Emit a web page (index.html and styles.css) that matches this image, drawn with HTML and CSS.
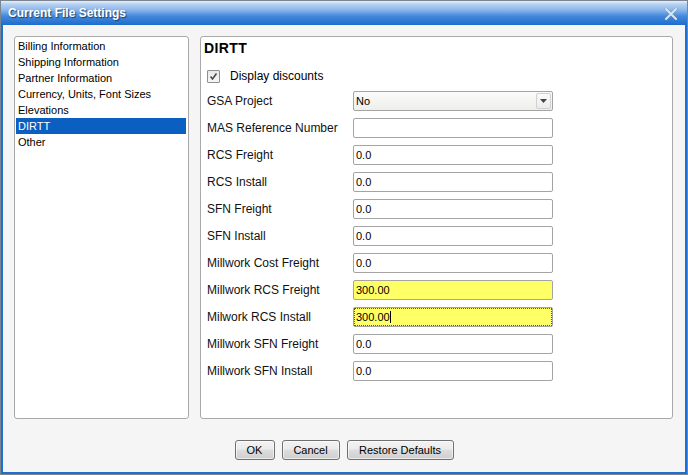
FILE: index.html
```html
<!DOCTYPE html>
<html>
<head>
<meta charset="utf-8">
<link rel="stylesheet" href="styles.css">
</head>
<body>
<div class="window">
  <div class="titlebar">
    <span class="title">Current File Settings</span>
    <span class="close"><svg width="14" height="12" viewBox="0 0 14 12"><path d="M2 1 L12 11 M12 1 L2 11" stroke="#5d7fa8" stroke-width="3" stroke-linecap="round" opacity="0.5"/><path d="M2 1 L12 11 M12 1 L2 11" stroke="#dfe6ee" stroke-width="2" stroke-linecap="round"/></svg></span>
  </div>
  <div class="body">
    <div class="panels">
      <ul class="nav">
        <li>Billing Information</li>
        <li>Shipping Information</li>
        <li>Partner Information</li>
        <li>Currency, Units, Font Sizes</li>
        <li>Elevations</li>
        <li class="selected">DIRTT</li>
        <li>Other</li>
      </ul>
      <div class="content">
        <h2 class="heading">DIRTT</h2>
        <div class="check">
          <span class="box"><svg width="11" height="11" viewBox="0 0 11 11"><path d="M2.5 5.5 L4.5 8 L8.5 2.5" stroke="#4a4a4a" stroke-width="1.6" fill="none"/></svg></span>
          <span>Display discounts</span>
        </div>
        <div class="form">
          <div class="label">GSA Project</div>
          <div class="field select"><span>No</span><span class="arrow"><svg width="7" height="4" viewBox="0 0 7 4"><path d="M0 0 H7 L3.5 4 Z" fill="#444"/></svg></span></div>
          <div class="label">MAS Reference Number</div>
          <div class="field"></div>
          <div class="label">RCS Freight</div>
          <div class="field">0.0</div>
          <div class="label">RCS Install</div>
          <div class="field">0.0</div>
          <div class="label">SFN Freight</div>
          <div class="field">0.0</div>
          <div class="label">SFN Install</div>
          <div class="field">0.0</div>
          <div class="label">Millwork Cost Freight</div>
          <div class="field">0.0</div>
          <div class="label">Millwork RCS Freight</div>
          <div class="field yellow">300.00</div>
          <div class="label">Milwork RCS Install</div>
          <div class="field yellow focused"><span class="caret">300.00</span></div>
          <div class="label">Millwork SFN Freight</div>
          <div class="field">0.0</div>
          <div class="label">Millwork SFN Install</div>
          <div class="field">0.0</div>
        </div>
      </div>
    </div>
    <div class="buttons">
      <button class="btn btn-ok">OK</button>
      <button class="btn btn-cancel">Cancel</button>
      <button class="btn btn-restore">Restore Defaults</button>
    </div>
  </div>
</div>
</body>
</html>
```

FILE: styles.css
```css
* { box-sizing: border-box; }
html, body { margin: 0; padding: 0; }
body {
  width: 688px;
  height: 475px;
  overflow: hidden;
  font-family: "Liberation Sans", Arial, sans-serif;
  font-size: 11px;
  color: #000;
  background: #fff;
}
.window {
  width: 688px;
  height: 475px;
  border: 1px solid #7b8591;
  display: flex;
  flex-direction: column;
}
.titlebar {
  height: 24px;
  flex: none;
  display: flex;
  align-items: center;
  justify-content: space-between;
  padding: 0 9px 1px 7px;
  background: linear-gradient(to bottom, #e9f1fb 0px, #b9d2f1 3px, #8ab7ec 9px, #4589db 15px, #1d6ccd 24px);
}
.title {
  color: #fff;
  font-weight: bold;
  font-size: 12px;
  text-shadow: 1px 1px 1px #1b3e6b;
}
.close { display: flex; margin-top: 2px; }
.body {
  flex: 1;
  display: flex;
  flex-direction: column;
  background: #f5f5f5;
  border: 2px solid #1e6fd0;
  border-top: none;
  padding: 11px 11px 12px 11px;
}
.panels {
  flex: 1;
  display: flex;
  gap: 11px;
}
.nav {
  width: 175px;
  margin: 0;
  padding: 1px 2px 0 1px;
  list-style: none;
  background: #fff;
  border: 1px solid #a9a9a9;
  border-radius: 3px;
}
.nav li {
  height: 16px;
  line-height: 16px;
  padding-left: 2px;
  white-space: nowrap;
}
.nav li.selected {
  background: #0b5fc1;
  color: #fff;
}
.content {
  flex: 1;
  margin-right: 1px;
  background: #fff;
  border: 1px solid #a9a9a9;
  border-radius: 3px;
  padding: 3px 6px 0 6px;
}
.heading {
  margin: 0 0 0 -3px;
  font-size: 14px;
  line-height: 16px;
  font-weight: bold;
  letter-spacing: 0.4px;
}
.check {
  margin-top: 12px;
  height: 16px;
  display: flex;
  align-items: center;
  font-size: 12px;
}
.box {
  width: 13px;
  height: 13px;
  border: 1px solid #8f8f8f;
  border-radius: 1px;
  background: linear-gradient(to bottom, #e8e8e8, #f6f6f6);
  display: flex;
  align-items: center;
  justify-content: center;
  margin-right: 10px;
}
.form {
  margin-top: 7px;
  display: grid;
  grid-template-columns: 146px 200px;
  grid-auto-rows: 20px;
  row-gap: 7px;
}
.label {
  font-size: 12px;
  line-height: 20px;
  white-space: nowrap;
  color: #111;
}
.field {
  border: 1px solid #a4a4a4;
  border-radius: 2px;
  background: #fff;
  padding-left: 2px;
  line-height: 18px;
  font-size: 11px;
}
.field.select {
  display: flex;
  justify-content: space-between;
  align-items: center;
  background: linear-gradient(to bottom, #fbfbfa, #eeeeea);
  padding-right: 1px;
}
.arrow {
  width: 15px;
  height: 16px;
  border: 1px solid #d0d0d0;
  border-radius: 2px;
  background: linear-gradient(to bottom, #fbfbfb, #ececec);
  display: flex;
  align-items: center;
  justify-content: center;
}
.field.yellow { background: #ffff66; }
.field.focused {
  outline: 1px dotted #5a5a30;
  outline-offset: -2px;
}
.caret { border-right: 1px solid #000; }
.buttons {
  margin-top: 21px;
  height: 20px;
  display: flex;
  justify-content: center;
  gap: 7px;
}
.btn {
  height: 20px;
  padding: 0;
  font-family: "Liberation Sans", Arial, sans-serif;
  font-size: 11px;
  color: #000;
  border: 1px solid #707070;
  border-radius: 3px;
  background: linear-gradient(to bottom, #f3f3f3 0%, #ebebeb 45%, #dddddd 50%, #cfcfcf 100%);
  box-shadow: inset 0 0 0 1px rgba(255,255,255,0.6);
}
.btn-ok { width: 40px; }
.btn-cancel { width: 58px; }
.btn-restore { width: 107px; }
```
